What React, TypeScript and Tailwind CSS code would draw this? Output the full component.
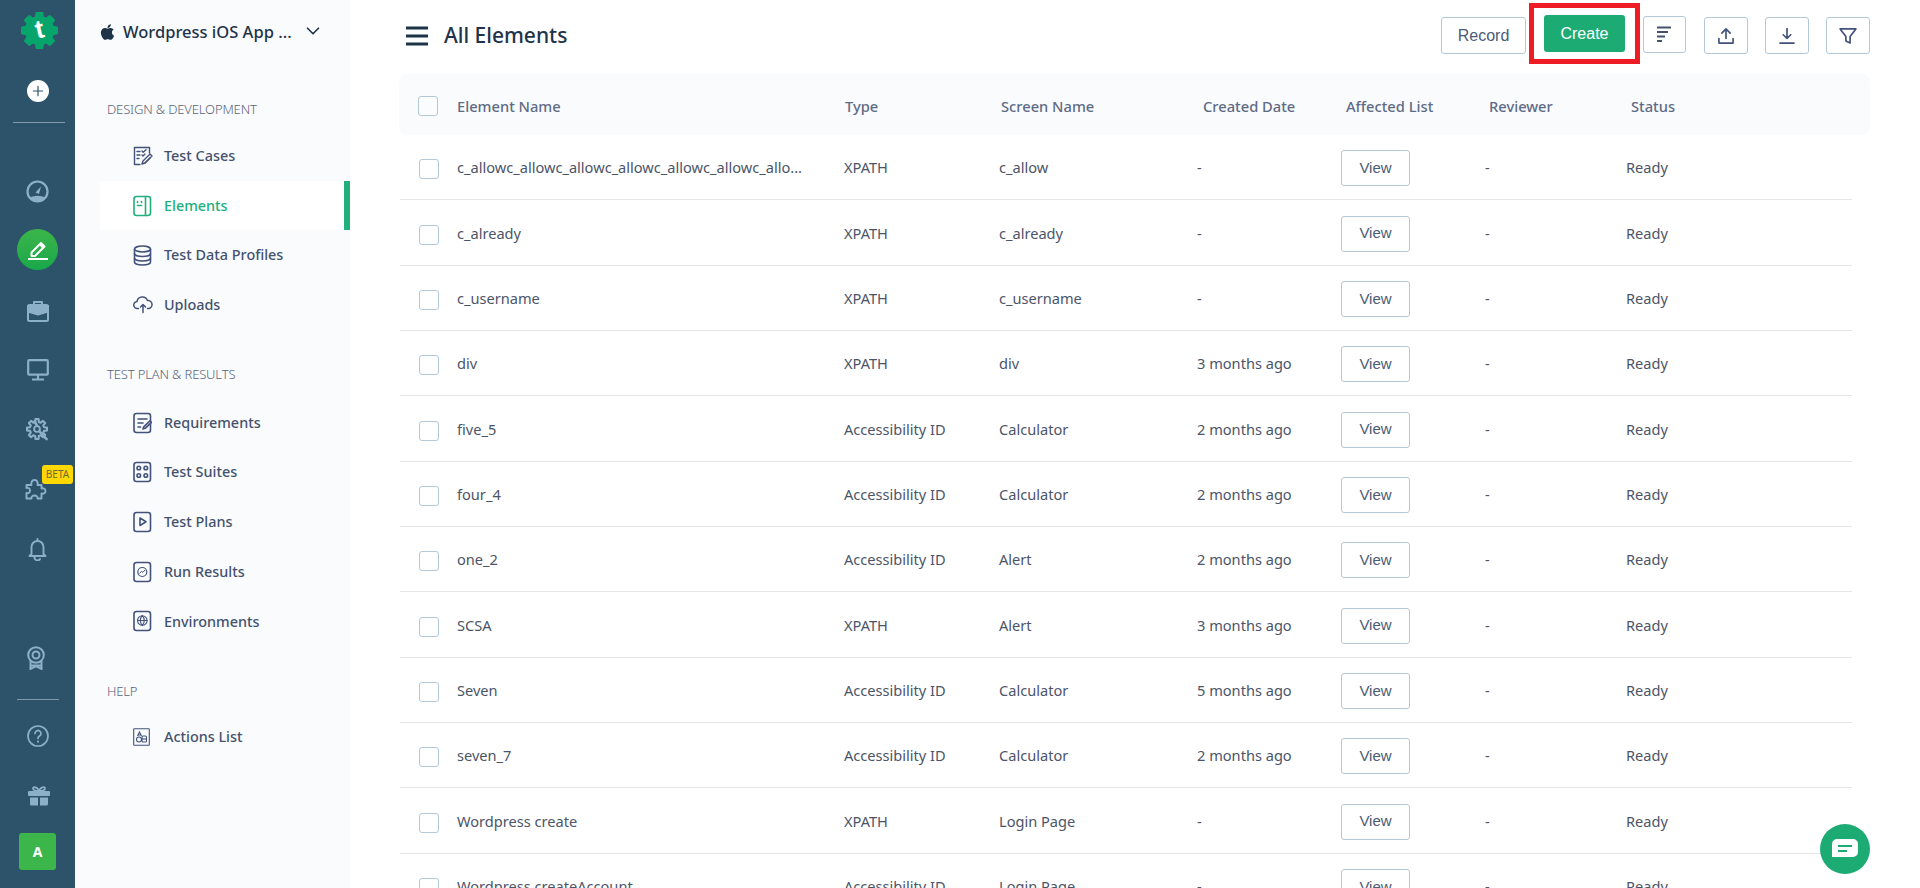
import React from "react";
import { FaApple } from "react-icons/fa";
import { ChevronDown } from "lucide-react";

const railStroke = "#8db0c9";

function Rail({ children, cls }: { children: React.ReactNode; cls: string }) {
  return <div className={"flex items-center justify-center w-[75px] shrink-0 " + cls}>{children}</div>;
}

function S({ children, size = 24, stroke = railStroke, sw = 2 }: { children: React.ReactNode; size?: number; stroke?: string; sw?: number }) {
  return (
    <svg width={size} height={size} viewBox="0 0 24 24" fill="none" stroke={stroke} strokeWidth={sw} strokeLinecap="round" strokeLinejoin="round">
      {children}
    </svg>
  );
}

function gearPoints(cx: number, cy: number, outer: number, inner: number, n: number) {
  const pts: string[] = [];
  for (let i = 0; i < n; i++) {
    const step = (Math.PI * 2) / n;
    const a = step * i - Math.PI / 2;
    const angs: [number, number][] = [
      [a - step * 0.2, outer],
      [a + step * 0.2, outer],
      [a + step * 0.32, inner],
      [a + step * 0.68, inner],
    ];
    for (const [t, r] of angs) pts.push(`${(cx + r * Math.cos(t)).toFixed(1)},${(cy + r * Math.sin(t)).toFixed(1)}`);
  }
  return pts.join(" ");
}

function Logo() {
  return (
    <div className="relative w-[37px] h-[37px] flex items-center justify-center">
      <svg width="37" height="37" viewBox="0 0 37 37" className="absolute inset-0">
        <polygon points={gearPoints(18.5, 18.5, 17.5, 13.5, 8)} fill="#07a56c" stroke="#07a56c" strokeWidth="2.500" strokeLinejoin="round" />
      </svg>
      <span className="relative text-white font-bold text-[26px] leading-none -mt-[4px] -rotate-12 [font-family:'Liberation_Sans',sans-serif]">t</span>
    </div>
  );
}

const N = "#43527a";
function Doc({ children, color = N }: { children?: React.ReactNode; color?: string }) {
  return (
    <svg width="19" height="22" viewBox="0 0 19 22" fill="none" stroke={color} strokeWidth="1.6" strokeLinecap="round" strokeLinejoin="round">
      <rect x="1" y="1.5" width="16.5" height="19" rx="2.5" />
      {children}
    </svg>
  );
}

const navIcons: Record<string, React.ReactNode> = {
  cases: (
    <svg width="20" height="20" viewBox="0 0 20 20" fill="none" stroke={N} strokeWidth="1.4" strokeLinecap="round" strokeLinejoin="round">
      <path d="M7 18.5H1.5V1.5H16.5V7" />
      <path d="M4 5.5h3M4 9h3M4 12.5h2M9 5l1.2 1.2L13 3.8M9 9l1 1 2-2" />
      <path d="M9 18l1-3 7-7 2 2-7 7z" />
      <path d="M12 17l5-5" />
    </svg>
  ),
  elements: (
    <Doc color="#20b07b">
      <path d="M12.5 1.5v19" />
      <path d="M4.5 6.5v1M8.5 6.5v1M4.5 10.5h4" />
    </Doc>
  ),
  data: (
    <svg width="19" height="21" viewBox="0 0 19 21" fill="none" stroke={N} strokeWidth="1.6">
      <ellipse cx="9.5" cy="4" rx="8" ry="3" />
      <path d="M1.5 4v13c0 1.7 3.6 3 8 3s8-1.3 8-3V4" />
      <path d="M1.5 8.5c0 1.7 3.6 3 8 3s8-1.3 8-3M1.5 13c0 1.7 3.6 3 8 3s8-1.3 8-3" />
    </svg>
  ),
  uploads: (
    <svg width="20" height="18" viewBox="0 0 20 18" fill="none" stroke={N} strokeWidth="1.5" strokeLinecap="round" strokeLinejoin="round">
      <path d="M5.5 12.5H4.5a3.5 3.5 0 0 1-.5-7A5.5 5.5 0 0 1 14.5 4.5a4 4 0 0 1 1 8h-1" />
      <path d="M10 16.5V9M7.5 11l2.5-2.5 2.5 2.5" />
    </svg>
  ),
  req: (
    <Doc>
      <path d="M5 7h9M5 11h5M5 15h2.5" />
      <path d="M10 17l.7-2.2 6.3-6 1.5 1.5-6.3 6z" fill="#f9fbfd" />
    </Doc>
  ),
  suites: (
    <Doc>
      <circle cx="5.8" cy="7" r="1.8" />
      <circle cx="12.8" cy="7" r="1.8" />
      <circle cx="5.8" cy="14.5" r="1.8" />
      <circle cx="12.8" cy="14.5" r="1.8" />
    </Doc>
  ),
  plans: (
    <Doc>
      <path d="M7 7v7.5l6-3.7z" />
    </Doc>
  ),
  results: (
    <Doc>
      <circle cx="9.3" cy="11" r="4.5" strokeWidth="1.2" />
      <path d="M6.8 12l1.8-1.6 1.3 1 2-2.2" strokeWidth="1" />
    </Doc>
  ),
  env: (
    <Doc>
      <circle cx="9.3" cy="10.5" r="4.8" strokeWidth="1.1" />
      <path d="M4.5 10.5h9.6M9.3 5.7c-2.6 3-2.6 6.6 0 9.6 2.6-3 2.6-6.6 0-9.6z" strokeWidth="1.1" />
    </Doc>
  ),
  actions: (
    <svg width="17" height="18" viewBox="0 0 17 18" fill="none" stroke={N} strokeWidth="1.1">
      <rect x="0.7" y="0.7" width="15.6" height="16.6" rx="0.5" />
      <path d="M4.5 8l2-4 2 4M5 7h3" />
      <circle cx="6" cy="11.5" r="2.5" />
      <rect x="9" y="8" width="4.5" height="6" rx="1" />
      <path d="M9 11h4.5" />
    </svg>
  ),
};

function NavItem({ icon, label, active }: { icon: string; label: string; active?: boolean }) {
  return (
    <div className={"flex items-center h-[49.7px] ml-[25px] pl-[33px] " + (active ? "bg-white border-r-[6px] border-[#20b07b] text-[#20b07b]" : "text-[#45526d]")}>
      <div className="w-[31px] h-[22px] flex items-center shrink-0">{navIcons[icon]}</div>
      <span className="text-[14.4px] font-medium">{label}</span>
    </div>
  );
}

function Section({ label, cls }: { label: string; cls: string }) {
  return <div className={"pl-[32px] text-[13px] tracking-[-0.15px] font-light text-[#5a6478] leading-[18px] " + cls}>{label}</div>;
}

type Row = [string, string, string, string];
const rows: Row[] = [
  ["c_allowc_allowc_allowc_allowc_allowc_allowc_allo...", "XPATH", "c_allow", "-"],
  ["c_already", "XPATH", "c_already", "-"],
  ["c_username", "XPATH", "c_username", "-"],
  ["div", "XPATH", "div", "3 months ago"],
  ["five_5", "Accessibility ID", "Calculator", "2 months ago"],
  ["four_4", "Accessibility ID", "Calculator", "2 months ago"],
  ["one_2", "Accessibility ID", "Alert", "2 months ago"],
  ["SCSA", "XPATH", "Alert", "3 months ago"],
  ["Seven", "Accessibility ID", "Calculator", "5 months ago"],
  ["seven_7", "Accessibility ID", "Calculator", "2 months ago"],
  ["Wordpress create", "XPATH", "Login Page", "-"],
  ["Wordpress createAccount", "Accessibility ID", "Login Page", "-"],
];

function IconBtn({ children, cls }: { children: React.ReactNode; cls: string }) {
  return <div className={"h-[37px] flex items-center justify-center border border-[#b3c9d9] rounded-[3px] bg-white " + cls}>{children}</div>;
}

export default function App() {
  return (
    <div className="flex h-[888px] w-[1920px] overflow-hidden bg-white [font-family:'Noto_Sans',sans-serif]">
      {/* rail */}
      <div className="w-[75px] shrink-0 bg-[#2c5369] flex flex-col">
        <Rail cls="mt-[12px] h-[37px] pl-[3px]"><Logo /></Rail>
        <Rail cls="mt-[31px] h-[22px]">
          <div className="w-[22px] h-[22px] rounded-full bg-white flex items-center justify-center">
            <S size={14} stroke="#2c5369" sw={2}><path d="M12 4v16M4 12h16" /></S>
          </div>
        </Rail>
        <div className="mt-[20px] ml-[13px] w-[52px] h-px bg-[#7f9aab]" />
        <Rail cls="mt-[56px] h-[24px]">
          <svg width="23" height="23" viewBox="0 0 23 23" fill="none">
            <circle cx="11.5" cy="11.5" r="10" stroke={railStroke} strokeWidth="2.2" />
            <path d="M3.5 17.5a10 10 0 0 0 16 0q-8-3.500-16 0z" fill={railStroke} />
            <path d="M9.5 12.500l5.500-6-2 7.500z" fill={railStroke} />
          </svg>
        </Rail>
        <Rail cls="mt-[26px] h-[41px]">
          <div className="w-[41px] h-[41px] rounded-full bg-gradient-to-b from-[#3bb54a] to-[#17a84b] flex items-center justify-center">
            <svg width="22" height="22" viewBox="0 0 22 22" fill="none">
              <path d="M4.5 13.5L14 4l3.5 3.5-9.5 9.5H4.5z" stroke="white" strokeWidth="2" fill="none" strokeLinejoin="round" />
              <path d="M12 6l3.5 3.5L17.5 7.5 14 4z" fill="white" />
              <rect x="1" y="19" width="20" height="2" fill="white" />
            </svg>
          </div>
        </Rail>
        <Rail cls="mt-[29px] h-[24px]">
          <svg width="22" height="22" viewBox="0 0 22 22" fill="none" stroke={railStroke} strokeWidth="2" strokeLinejoin="round">
            <rect x="1" y="5" width="20" height="16" rx="1.5" />
            <path d="M7 5V2h8v3" />
            <path d="M1 6h20v5.5l-10 3-10-3z" fill={railStroke} />
          </svg>
        </Rail>
        <Rail cls="mt-[36px] h-[22px]">
          <svg width="22" height="22" viewBox="0 0 22 22" fill="none" stroke={railStroke} strokeWidth="2.2" strokeLinejoin="round">
            <rect x="1.2" y="1.2" width="19.6" height="14.5" rx="1" />
            <path d="M11 16v4M5 20.5h12" />
          </svg>
        </Rail>
        <Rail cls="mt-[36px] h-[24px]">
          <svg width="23" height="23" viewBox="0 0 24 24" fill="none" stroke={railStroke} strokeLinejoin="round" strokeLinecap="round">
            <polygon points={gearPoints(11.5, 11.5, 10.5, 7.5, 8)} strokeWidth="2.2" />
            <circle cx="11.500" cy="11.500" r="3" strokeWidth="2" />
            <path d="M14 14l7.500 8M9 3.500l2.500 4.500" strokeWidth="2.600" />
          </svg>
        </Rail>
        <Rail cls="mt-[36px] h-[24px] pr-[3px]">
          <svg width="22" height="22" viewBox="0 0 22 22" fill="none" stroke={railStroke} strokeWidth="1.9" strokeLinejoin="round">
            <path d="M1.500 7H6.500C6 5 6.500 2 9.500 2S13 5 12.500 7H16.500V10.500C18 10 20.500 10.500 20.500 13S18 16 16.500 15.500V20.500H12.500C13 19 11.500 17.500 9.500 17.500S6 19 6.500 20.500H1.500V15C3.500 15.500 5 14.500 5 12.500S3.500 9.500 1.500 10z" />
          </svg>
        </Rail>
        <Rail cls="mt-[36px] h-[24px]">
          <svg width="19" height="23" viewBox="0 0 19 23" fill="none" stroke={railStroke} strokeWidth="1.9" strokeLinecap="round" strokeLinejoin="round">
            <path d="M9.500 1v2M3.500 16V9a6 6 0 0 1 12 0v7l2 2H1.500z" />
            <path d="M7 18a2.500 2.500 0 0 0 5 3" />
          </svg>
        </Rail>
        <Rail cls="mt-[85px] h-[24px] pr-[3px]">
          <svg width="18" height="24" viewBox="0 0 18 24" fill="none" stroke={railStroke} strokeWidth="2">
            <circle cx="9" cy="9" r="7.800" />
            <circle cx="9" cy="9" r="3.500" />
            <path d="M3.500 15v8l5.500-3 5.500 3v-8" />
            <path d="M3.500 19.500h11" />
          </svg>
        </Rail>
        <div className="mt-[29px] ml-[17px] w-[42px] h-px bg-[#7f9aab]" />
        <Rail cls="mt-[25px] h-[22px]">
          <svg width="22" height="22" viewBox="0 0 22 22" fill="none" stroke={railStroke} strokeWidth="1.700" strokeLinecap="round">
            <circle cx="11" cy="11" r="10" />
            <path d="M8 8.500a3 3 0 1 1 4.500 2.600c-1 .6-1.500 1.200-1.500 2.400" />
            <path d="M11 16.500v.3" strokeWidth="2" />
          </svg>
        </Rail>
        <Rail cls="mt-[39px] h-[20px] pl-[3px]">
          <svg width="22" height="20" viewBox="0 0 22 20" fill={railStroke}>
            <rect x="0" y="5" width="22" height="5" rx="1" />
            <path d="M2 11.500h8V19.500H3.500A1.500 1.500 0 0 1 2 18zM12 11.500h8V18a1.500 1.500 0 0 1-1.500 1.500H12z" />
            <path d="M11 5C8 5 5 4.500 5 2.500S9.500 .5 11 5zM11 5c3 0 6-.5 6-2.500S12.500 .5 11 5z" fill="none" stroke={railStroke} strokeWidth="1.800" />
          </svg>
        </Rail>
        <Rail cls="mt-[27px] h-[37px]">
          <div className="w-[37px] h-[37px] rounded-[3px] bg-[#3cb54a] text-white font-bold text-[14px] flex items-center justify-center">A</div>
        </Rail>
      </div>

      {/* nav */}
      <div className="w-[275px] shrink-0 bg-[#f9fbfd] relative">
        <div className="flex items-center h-[24px] mt-[20px] ml-[25px] text-[#1f3349]">
          <FaApple className="w-[15px] h-[18px] text-[#1f3349]" />
          <span className="ml-[8px] text-[16.5px] font-medium whitespace-nowrap">Wordpress iOS App ...</span>
          <ChevronDown className="ml-[10px] -mt-[3px] w-[22px] h-[22px]" strokeWidth={1.800} />
        </div>
        <Section label="DESIGN & DEVELOPMENT" cls="mt-[56px]" />
        <div className="mt-[13px]">
          <NavItem icon="cases" label="Test Cases" />
          <NavItem icon="elements" label="Elements" active />
          <NavItem icon="data" label="Test Data Profiles" />
          <NavItem icon="uploads" label="Uploads" />
        </div>
        <Section label="TEST PLAN & RESULTS" cls="mt-[35px]" />
        <div className="mt-[15px]">
          <NavItem icon="req" label="Requirements" />
          <NavItem icon="suites" label="Test Suites" />
          <NavItem icon="plans" label="Test Plans" />
          <NavItem icon="results" label="Run Results" />
          <NavItem icon="env" label="Environments" />
        </div>
        <Section label="HELP" cls="mt-[36px]" />
        <div className="mt-[12px]">
          <NavItem icon="actions" label="Actions List" />
        </div>
      </div>

      {/* main */}
      <div className="flex-1 min-w-0 pl-[49px] pr-[50px] relative">
        <div className="flex items-center h-[74px]">
          <svg width="22" height="20" viewBox="0 0 22 20" className="ml-[7px] -mt-[2px]" fill="#1f3349">
            <rect width="22" height="3" y="0.500" />
            <rect width="22" height="3" y="8.500" />
            <rect width="22" height="3" y="16.500" />
          </svg>
          <span className="ml-[16px] text-[21px] font-medium text-[#1f3349] -mt-[3px]">All Elements</span>
          <div className="ml-auto self-start flex items-start [font-family:'Liberation_Sans',sans-serif]">
            <IconBtn cls="mt-[17px] w-[85px] text-[16px] text-[#4b5b78]">Record</IconBtn>
            <div className="mt-[3px] ml-[3px] w-[111px] h-[61px] border-[5px] border-[#ee1c25] flex items-center justify-center">
              <div className="w-[81px] h-[37px] rounded-[3px] bg-[#1dab74] text-white text-[16px] flex items-center justify-center">Create</div>
            </div>
            <IconBtn cls="mt-[16px] ml-[3px] w-[43px]">
              <svg width="16" height="17" viewBox="0 0 16 17" fill="#45526d">
                <rect width="14" height="2" y="0.500" />
                <rect width="11" height="2" y="5" />
                <rect width="8" height="2" y="9.500" />
                <rect width="5" height="2" y="14" />
              </svg>
            </IconBtn>
            <IconBtn cls="mt-[17px] ml-[18px] w-[44px]">
              <S size={20} stroke={N} sw={2}><path d="M12 15V4M7 8.500L12 3.500l5 5M3.500 15v5.500h17V15" /></S>
            </IconBtn>
            <IconBtn cls="mt-[17px] ml-[17px] w-[44px]">
              <S size={20} stroke={N} sw={2}><path d="M12 3v12M7.500 10.500L12 15l4.500-4.500M3.500 20.500h17" /></S>
            </IconBtn>
            <IconBtn cls="mt-[17px] ml-[17px] w-[44px]">
              <S size={20} stroke={N} sw={2}><path d="M2.500 3.500h19l-7 9v8l-5-2.500v-5.500z" /></S>
            </IconBtn>
          </div>
        </div>

        <div className="h-[61px] pt-[4px] rounded-[8px] bg-[#f9fbfd] grid grid-cols-[58px_388px_156px_202px_143px_143px_142px_1fr] items-center text-[14.7px] font-medium text-[#5f6b85]">
          <div className="pl-[19px]">
            <div className="w-[20px] h-[20px] -mt-[1px] border border-[#b3c9d9] rounded-[3px] bg-white/40" />
          </div>
          <div>Element Name</div>
          <div>Type</div>
          <div>Screen Name</div>
          <div>Created Date</div>
          <div>Affected List</div>
          <div>Reviewer</div>
          <div>Status</div>
        </div>

        <div className="mr-[18px] ml-px">
          {rows.map((r) => (
            <div key={r[0]} className="h-[65.35px] pt-[2px] border-b border-[#e3e5e8] grid grid-cols-[57px_387px_155px_198px_144px_144px_141px_1fr] items-center text-[14.6px] text-[#4c5568]">
              <div className="pl-[19px]">
                <div className="w-[20px] h-[20px] mt-[2px] border border-[#b3c9d9] rounded-[3px]" />
              </div>
              <div className="whitespace-nowrap">{r[0]}</div>
              <div>{r[1]}</div>
              <div>{r[2]}</div>
              <div>{r[3]}</div>
              <div>
                <div className="w-[69px] h-[36px] border border-[#b3c9d9] rounded-[3px] text-[#4b5b78] text-[15px] flex items-center justify-center [font-family:'Liberation_Sans',sans-serif]">View</div>
              </div>
              <div>-</div>
              <div>Ready</div>
            </div>
          ))}
        </div>
      </div>

      {/* chat */}
      <div className="fixed left-[1820px] top-[824px] w-[50px] h-[50px] rounded-full bg-[#1dab74] flex items-center justify-center">
        <svg width="26" height="20" viewBox="0 0 26 20">
          <path d="M5 0h16a5 5 0 0 1 5 5v8a5 5 0 0 1-5 5H0V5a5 5 0 0 1 5-5z" fill="white" />
          <path d="M6 7h14M6 12h9" stroke="#1dab74" strokeWidth="2" />
        </svg>
      </div>

      {/* beta badge */}
      <div className="fixed left-[42px] top-[465px] w-[31px] h-[19px] rounded-[3px] bg-[#ffd800] text-[#6a6b3a] text-[10px] flex items-center justify-center">BETA</div>
    </div>
  );
}
